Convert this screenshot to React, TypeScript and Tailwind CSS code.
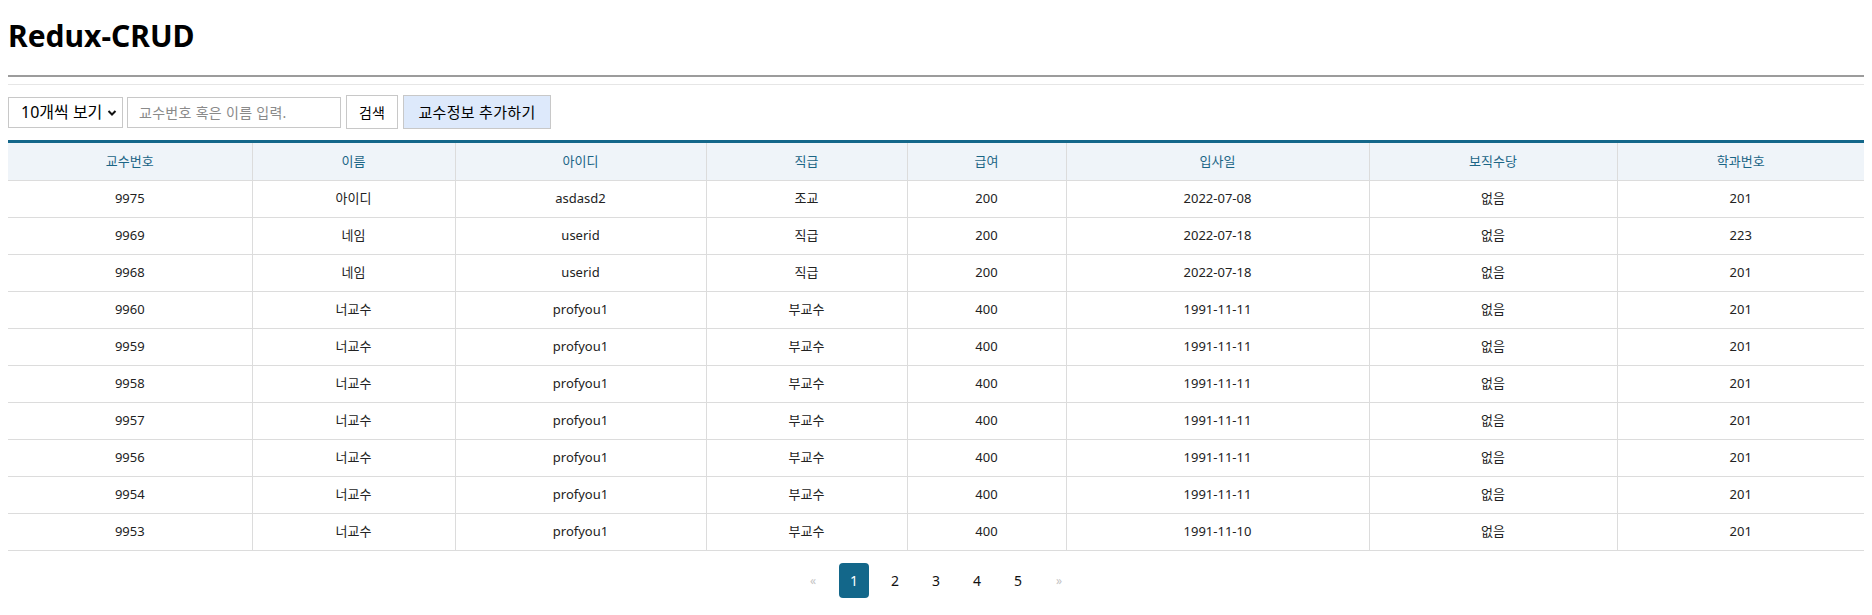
import { useState } from "react";

const columns = [
  { label: "교수번호", width: "w-[244px]" },
  { label: "이름", width: "w-[203px]" },
  { label: "아이디", width: "w-[251px]" },
  { label: "직급", width: "w-[201px]" },
  { label: "급여", width: "w-[159px]" },
  { label: "입사일", width: "w-[303px]" },
  { label: "보직수당", width: "w-[248px]" },
  { label: "학과번호", width: "w-[247px]" },
];

const rows = [
  ["9975", "아이디", "asdasd2", "조교", "200", "2022-07-08", "없음", "201"],
  ["9969", "네임", "userid", "직급", "200", "2022-07-18", "없음", "223"],
  ["9968", "네임", "userid", "직급", "200", "2022-07-18", "없음", "201"],
  ["9960", "너교수", "profyou1", "부교수", "400", "1991-11-11", "없음", "201"],
  ["9959", "너교수", "profyou1", "부교수", "400", "1991-11-11", "없음", "201"],
  ["9958", "너교수", "profyou1", "부교수", "400", "1991-11-11", "없음", "201"],
  ["9957", "너교수", "profyou1", "부교수", "400", "1991-11-11", "없음", "201"],
  ["9956", "너교수", "profyou1", "부교수", "400", "1991-11-11", "없음", "201"],
  ["9954", "너교수", "profyou1", "부교수", "400", "1991-11-11", "없음", "201"],
  ["9953", "너교수", "profyou1", "부교수", "400", "1991-11-10", "없음", "201"],
];

export default function App() {
  const [page, setPage] = useState(1);
  const [keyword, setKeyword] = useState("");

  return (
    <div className="px-2 bg-white text-[#111] font-['Noto_Sans','Noto_Sans_CJK_KR',sans-serif] min-h-[615px]">
      {/* Title */}
      <div className="pt-[13px] h-[59px]">
        <h1 className="text-[30px] leading-[46px] font-bold text-black">Redux-CRUD</h1>
      </div>

      {/* hr */}
      <div className="mt-[16px] border-t-2 border-[#9c9c9c] h-[9px]" />
      <div className="border-t border-[#e6e6e6]" />

      {/* Controls */}
      <div className="mt-[10px] flex items-center h-[34px]">
        <div className="relative w-[115px] h-[31px] border border-[#c8c8c8] bg-white flex items-center pl-[12px] text-[16px] text-black">
          <span>10개씩 보기</span>
          <svg className="absolute right-[5px] top-[11px]" width="10" height="8" viewBox="0 0 10 8">
            <path d="M1.5 2 L5 5.5 L8.5 2" fill="none" stroke="#111" strokeWidth="2" />
          </svg>
        </div>
        <input
          value={keyword}
          onChange={(e) => setKeyword(e.target.value)}
          placeholder="교수번호 혹은 이름 입력."
          className="ml-[4px] w-[214px] h-[31px] border border-[#c8c8c8] px-[11px] text-[14px] tracking-[0.3px] outline-none placeholder:text-[#8a8a8a]"
        />
        <button className="ml-[5px] w-[52px] h-[34px] border border-[#c8c8c8] bg-white text-[14px] text-black">
          검색
        </button>
        <button className="ml-[5px] w-[148px] h-[34px] border border-[#c8c8c8] bg-[#dde9fb] text-[15px] tracking-[0.3px] text-black">
          교수정보 추가하기
        </button>
      </div>

      {/* Table */}
      <table className="mt-[11px] w-full table-fixed border-collapse border-t-[3px] border-[#13678a] text-[13px]">
        <colgroup>
          {columns.map((c) => (
            <col key={c.label} className={c.width} />
          ))}
        </colgroup>
        <thead>
          <tr className="h-[39px] bg-[#eff4f9]">
            {columns.map((c, i) => (
              <th
                key={c.label}
                className={`font-normal text-[#1b6586] border-b border-[#dcdcdc] ${
                  i > 0 ? "border-l" : ""
                }`}
              >
                {c.label}
              </th>
            ))}
          </tr>
        </thead>
        <tbody>
          {rows.map((r, ri) => (
            <tr key={ri} className="h-[37px]">
              {r.map((cell, ci) => (
                <td
                  key={ci}
                  className={`text-center text-[#222] border-b border-[#dcdcdc] ${
                    ci > 0 ? "border-l" : ""
                  }`}
                >
                  {cell}
                </td>
              ))}
            </tr>
          ))}
        </tbody>
      </table>

      {/* Pagination */}
      <div className="mt-[12px] flex justify-center items-center gap-[11px] text-[14px]">
        <span className="w-[30px] h-[35px] flex items-center justify-center text-[#c4c4c4] text-[12px]">«</span>
        {[1, 2, 3, 4, 5].map((n) => (
          <button
            key={n}
            onClick={() => setPage(n)}
            className={`w-[30px] h-[35px] flex items-center justify-center rounded-[4px] ${
              page === n ? "bg-[#13678a] text-white" : "text-[#111]"
            }`}
          >
            {n}
          </button>
        ))}
        <span className="w-[30px] h-[35px] flex items-center justify-center text-[#c4c4c4] text-[12px]">»</span>
      </div>
    </div>
  );
}
